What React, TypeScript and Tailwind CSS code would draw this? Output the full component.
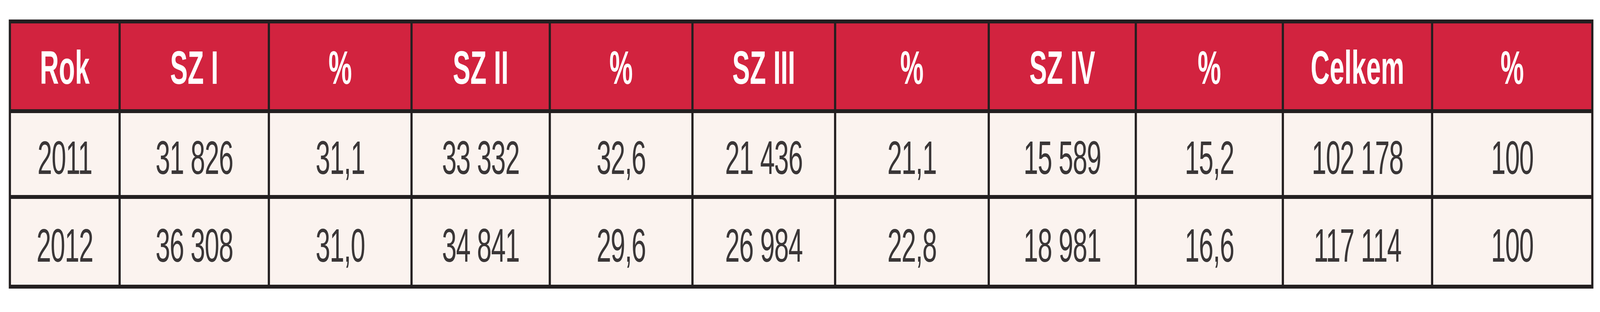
import { useEffect, useState } from "react";

// Tabulka: počty podle SZ za roky 2011 a 2012

const headers = ["Rok", "SZ I", "%", "SZ II", "%", "SZ III", "%", "SZ IV", "%", "Celkem", "%"];

const rows = [
  { h: "h-[210px]", cells: ["2011", "31 826", "31,1", "33 332", "32,6", "21 436", "21,1", "15 589", "15,2", "102 178", "100"] },
  { h: "h-[220px]", cells: ["2012", "36 308", "31,0", "34 841", "29,6", "26 984", "22,8", "18 981", "16,6", "117 114", "100"] },
];

const DESIGN_WIDTH = 7290;

const font = { fontFamily: '"Liberation Sans", Arial, sans-serif' };

export default function App() {
  // the window may be narrower than the design width: fit it horizontally
  const [scale, setScale] = useState(1);

  useEffect(() => {
    const fit = () => setScale(Math.min(1, window.innerWidth / DESIGN_WIDTH));
    fit();
    window.addEventListener("resize", fit);
    return () => window.removeEventListener("resize", fit);
  }, []);

  return (
    <div className="w-full h-[800px] overflow-hidden bg-white">
      <div
        className="w-[7290px] h-[800px] bg-white pt-[50px] pl-[40px] origin-top-left"
        style={{ ...font, transform: `scaleX(${scale})` }}
      >
        <div className="inline-grid grid-cols-[490px_670px_640px_620px_640px_640px_690px_660px_660px_670px_720px] gap-[10px] p-[10px] bg-[#231f20]">
          {/* hlavička */}
          {headers.map((label, i) => (
            <div
              key={`h-${i}`}
              className="h-[220px] bg-[#d2233f] flex items-center justify-center pt-[6px] text-white font-bold text-[120px] leading-none"
            >
              {label}
            </div>
          ))}

          {/* řádky */}
          {rows.map((row, r) =>
            row.cells.map((value, i) => (
              <div
                key={`r-${r}-${i}`}
                className={`${row.h} bg-[#fbf3ef] flex items-center justify-center pt-[18px] text-[#3a3637] font-normal text-[120px] leading-none tracking-[-0.02em]`}
              >
                {value}
              </div>
            ))
          )}
        </div>
      </div>
    </div>
  );
}
